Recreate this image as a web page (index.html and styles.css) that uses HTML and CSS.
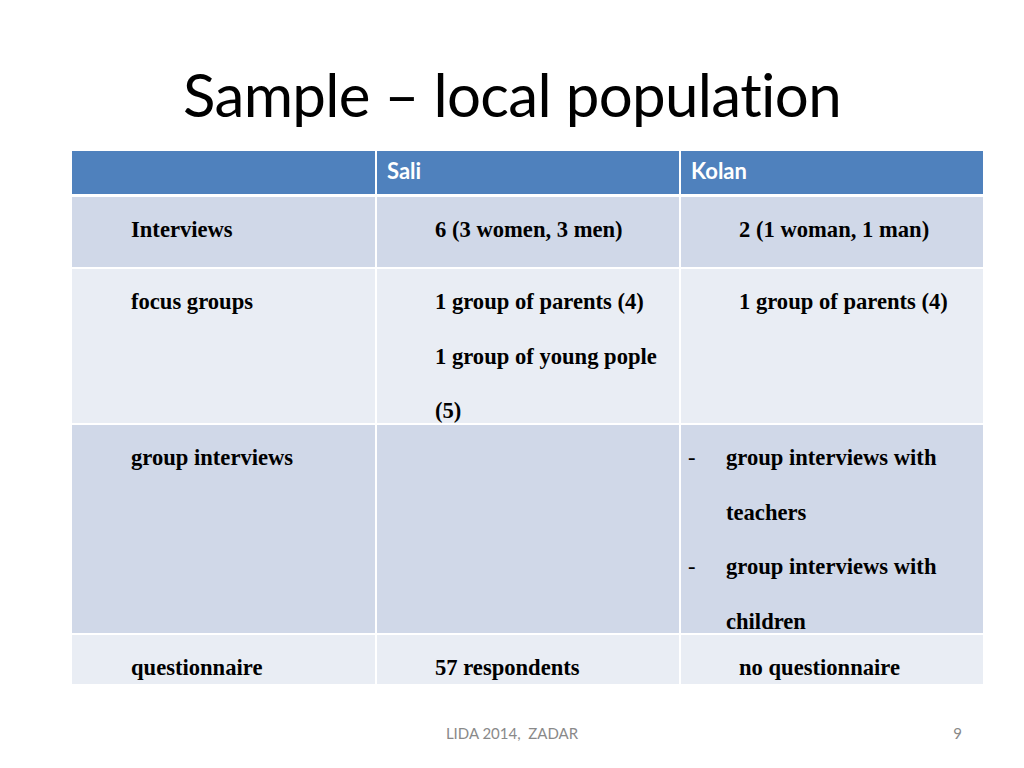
FILE: index.html
```html
<!DOCTYPE html>
<html lang="en">
<head>
<meta charset="utf-8">
<title>Sample – local population</title>
<link rel="stylesheet" href="styles.css">
</head>
<body>
<div class="slide">
  <h1 class="title">Sample – local population</h1>
  <div class="table">
    <div class="row head">
      <div class="cell"></div>
      <div class="cell">Sali</div>
      <div class="cell">Kolan</div>
    </div>
    <div class="row dark r1">
      <div class="cell">Interviews</div>
      <div class="cell">6 (3 women, 3 men)</div>
      <div class="cell">2 (1 woman, 1 man)</div>
    </div>
    <div class="row light r2">
      <div class="cell">focus groups</div>
      <div class="cell">1 group of parents (4)<br>1 group of young pople<br>(5)</div>
      <div class="cell">1 group of parents (4)</div>
    </div>
    <div class="row dark r3">
      <div class="cell">group interviews</div>
      <div class="cell"></div>
      <div class="cell list">
        <div class="item"><span class="dash">-</span><span>group interviews with teachers</span></div>
        <div class="item"><span class="dash">-</span><span>group interviews with children</span></div>
      </div>
    </div>
    <div class="row light r4">
      <div class="cell">questionnaire</div>
      <div class="cell">57 respondents</div>
      <div class="cell">no questionnaire</div>
    </div>
  </div>
  <footer class="footer">
    <span></span>
    <span class="foot-center">LIDA 2014,&nbsp; ZADAR</span>
    <span class="foot-num">9</span>
  </footer>
</div>
</body>
</html>
```

FILE: styles.css
```css
html, body {
  margin: 0;
  padding: 0;
  background: #ffffff;
}

.slide {
  width: 1024px;
  height: 768px;
  overflow: hidden;
  position: relative;
  background: #ffffff;
}

.title {
  margin: 0;
  padding-top: 58px;
  height: 72px;
  margin-bottom: 21px;
  font-family: Lato, "Open Sans", sans-serif;
  font-weight: 400;
  font-size: 60px;
  line-height: 72px;
  color: #000000;
  text-align: center;
  letter-spacing: -0.65px;
}

.table {
  margin-left: 72px;
  width: 911px;
  display: flex;
  flex-direction: column;
  gap: 2px;
}

.row {
  display: grid;
  grid-template-columns: 303px 302px 302px;
  grid-template-rows: minmax(0, 1fr);
  column-gap: 2px;
  flex: 0 0 auto;
}

.cell {
  overflow: visible;
  min-height: 0;
  box-sizing: border-box;
  font-family: "Liberation Serif", "Times New Roman", serif;
  font-weight: 700;
  font-size: 22.6px;
  line-height: 54.5px;
  color: #000000;
  padding: 6px 8px 0 58px;
}

.row .cell:first-child {
  padding-left: 59px;
}

.head {
  height: 43px;
  margin-bottom: 1px;
}

.head .cell {
  background: #4f81bd;
  font-family: Lato, "Open Sans", sans-serif;
  font-size: 22px;
  line-height: 37px;
  color: #ffffff;
  padding: 1px 0 0 10px;
}

.dark .cell {
  background: #d0d8e8;
}

.light .cell {
  background: #e9edf4;
}

.r1 { height: 70px; }
.r2 { height: 154px; }
.r3 { height: 208px; }
.r4 { height: 49px; }

.list {
  padding-left: 7px;
  padding-right: 30px;
}

.item {
  display: flex;
}

.dash {
  flex: 0 0 38px;
  font-weight: 400;
}

.footer {
  margin: 39px 62px 0 62px;
  display: grid;
  grid-template-columns: 1fr auto 1fr;
  font-family: Lato, "Open Sans", sans-serif;
  font-size: 15px;
  line-height: 20px;
  color: #898989;
}

.foot-num {
  justify-self: end;
}
```
